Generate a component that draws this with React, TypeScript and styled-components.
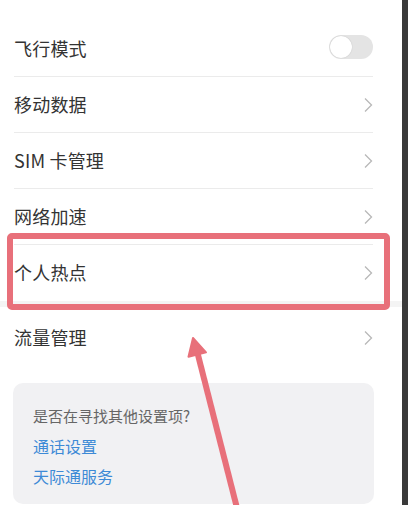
import React from 'react'
import styled, { createGlobalStyle } from 'styled-components'

const GlobalStyle = createGlobalStyle`
  html, body {
    margin: 0;
    padding: 0;
    background: #ffffff;
  }
  body {
    font-family: "Noto Sans CJK SC", "Noto Sans", sans-serif;
    overflow: hidden;
  }
`

type RowItem = {
  label: string
  kind: 'switch' | 'link'
}

const mainRows: RowItem[] = [
  { label: '飞行模式', kind: 'switch' },
  { label: '移动数据', kind: 'link' },
  { label: 'SIM 卡管理', kind: 'link' },
  { label: '网络加速', kind: 'link' },
  { label: '个人热点', kind: 'link' },
]

const Page = styled.div`
  position: relative;
  display: flex;
  width: 408px;
  height: 505px;
  overflow: hidden;
`

const Content = styled.div`
  flex: 1;
  display: flex;
  flex-direction: column;
  padding-top: 21px;

  & > * {
    flex-shrink: 0;
  }
`

const EdgeBar = styled.div`
  width: 6px;
  background: #3a3a3a;
`

const Section = styled.div`
  display: flex;
  flex-direction: column;
`

const Row = styled.div<{ $last?: boolean; $tall?: boolean }>`
  display: flex;
  flex-shrink: 0;
  align-items: center;
  justify-content: space-between;
  height: ${(p) => (p.$tall ? '62px' : '56px')};
  margin: 0 29px 0 14px;
  box-sizing: border-box;
  border-bottom: ${(p) => (p.$last ? 'none' : '1px solid #ebebeb')};
`

const Label = styled.span`
  font-size: 18px;
  line-height: 24px;
  margin-top: -2px;
  color: #333333;
  letter-spacing: 0.2px;
`

const Band = styled.div`
  height: 6px;
  background: #f4f4f4;
`

const Toggle = styled.div`
  position: relative;
  width: 44px;
  height: 24px;
  margin-top: -4px;
  border-radius: 12px;
  background: #e4e4e4;
`

const Knob = styled.div`
  position: absolute;
  left: 1px;
  top: 1px;
  width: 22px;
  height: 22px;
  border-radius: 50%;
  background: #ffffff;
  box-shadow: 0 0 1px rgba(0, 0, 0, 0.25);
`

const Card = styled.div`
  margin: 14px 28px 0 13px;
  padding: 18px 20px 13px;
  border-radius: 10px;
  background: #f1f1f3;
  display: flex;
  flex-direction: column;
`

const Hint = styled.span`
  font-size: 15px;
  line-height: 30px;
  color: #666666;
`

const CardLink = styled.span`
  font-size: 16px;
  line-height: 30px;
  color: #3d8ad6;
`

const Highlight = styled.div`
  position: absolute;
  left: 7px;
  top: 233px;
  width: 383px;
  height: 77px;
  box-sizing: border-box;
  border: 6px solid #e8707a;
  border-radius: 5px;
  pointer-events: none;
`

const Overlay = styled.svg`
  position: absolute;
  left: 0;
  top: 0;
  pointer-events: none;
`

const Chevron = () => (
  <svg width="10" height="16" viewBox="0 0 10 16">
    <path d="M2 1.5 L8.5 8 L2 14.5" fill="none" stroke="#b8b8b8" strokeWidth="1.3" />
  </svg>
)

export default function App() {
  return (
    <Page>
      <GlobalStyle />
      <Content>
        <Section>
          {mainRows.map((row, i) => (
            <Row key={row.label} $last={i === mainRows.length - 1}>
              <Label>{row.label}</Label>
              {row.kind === 'switch' ? (
                <Toggle>
                  <Knob />
                </Toggle>
              ) : (
                <Chevron />
              )}
            </Row>
          ))}
        </Section>
        <Band />
        <Row $last $tall>
          <Label>流量管理</Label>
          <Chevron />
        </Row>
        <Card>
          <Hint>是否在寻找其他设置项?</Hint>
          <CardLink>通话设置</CardLink>
          <CardLink>天际通服务</CardLink>
        </Card>
      </Content>
      <EdgeBar />
      <Highlight />
      <Overlay width="408" height="505" viewBox="0 0 408 505">
        <line x1="238" y1="512" x2="197.5" y2="353" stroke="#e8707a" strokeWidth="6" />
        <polygon points="193,338 206,352.3 188.5,356.8" fill="#e8707a" stroke="#e8707a" strokeWidth="2" strokeLinejoin="round" />
      </Overlay>
    </Page>
  )
}
